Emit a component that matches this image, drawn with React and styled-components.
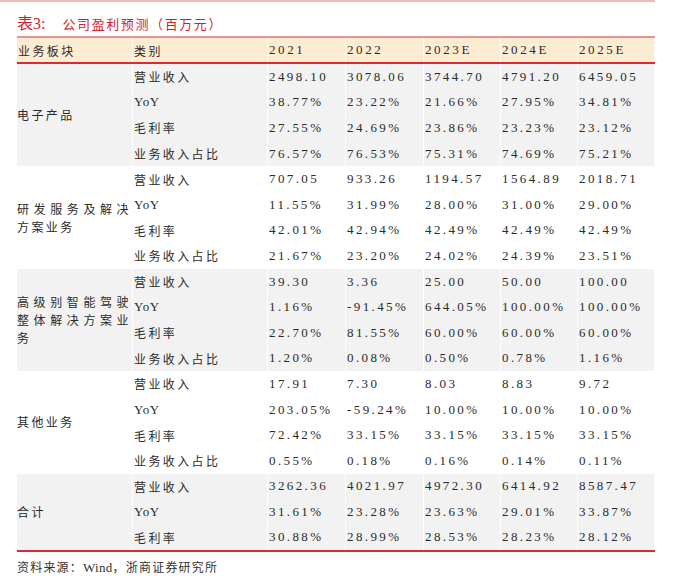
import React from "react";
import styled, { createGlobalStyle } from "styled-components";

const GlobalStyle = createGlobalStyle`
  body {
    margin: 0;
    background: #fff;
    color: #2b2b2b;
    font-family: "Liberation Serif", "Noto Sans CJK SC", serif;
  }
`;

const Page = styled.div`
  width: 655px;
  border-top: 2px solid #f2b9b9;
`;

const Inner = styled.div`
  padding-left: 17px;
`;

const Title = styled.div`
  margin-top: 10px;
  height: 24px;
  line-height: 24px;
  color: #cf1f2a;
  font-size: 13px;
  display: flex;
  gap: 17px;
`;

const TitleNo = styled.span`
  font-family: "Liberation Serif", "Noto Sans CJK SC", serif;
  font-size: 16px;
`;

const TitleText = styled.span`
  font-family: "Noto Sans CJK SC", sans-serif;
  letter-spacing: 1.6px;
`;

const Table = styled.table`
  width: 638px;
  border-collapse: collapse;
  table-layout: fixed;
`;

const Head = styled.th`
  height: 24px;
  padding: 0 1px;
  text-align: left;
  font-weight: normal;
  background: #feecd2;
  border-top: 2px solid #e49494;
  border-bottom: 2px solid #d92b33;
  box-shadow: inset -1px 0 0 rgba(255, 255, 255, 0.8);
  font-family: ${(p) =>
    p.$cjk ? `"Noto Sans CJK SC", sans-serif` : `"Liberation Serif", serif`};
  font-size: ${(p) => (p.$cjk ? "12px" : "13px")};
  letter-spacing: ${(p) => (p.$cjk ? "2.4px" : "2.6px")};
`;

const Row = styled.tr`
  background: ${(p) => (p.$shade ? "#f2f2f2" : "#fff")};
  border-bottom: ${(p) => (p.$last ? "2px solid #d92b33" : "none")};
`;

const spacing = { cjk: "2.4px", latin: "0.6px", num: "2.4px" };

const Cell = styled.td`
  height: 25.6px;
  padding: 0 1px;
  white-space: nowrap;
  box-shadow: inset -1px 0 0 rgba(255, 255, 255, 0.8);
  font-family: ${(p) =>
    p.$kind === "cjk"
      ? `"Noto Sans CJK SC", sans-serif`
      : `"Liberation Serif", serif`};
  font-size: ${(p) => (p.$kind === "cjk" ? "12px" : "13px")};
  letter-spacing: ${(p) => spacing[p.$kind]};
`;

const GroupCell = styled.td`
  padding: 0 2px 0 0;
  vertical-align: middle;
  font-family: "Noto Sans CJK SC", sans-serif;
  font-size: 12px;
  line-height: 18px;
  letter-spacing: 2.4px;
  text-align: justify;
  text-align-last: left;
  box-shadow: inset -1px 0 0 rgba(255, 255, 255, 0.8);
`;

const Source = styled.div`
  margin-top: 6px;
  line-height: 18px;
  font-size: 12px;
  letter-spacing: 1.2px;
  font-family: "Noto Sans CJK SC", sans-serif;
  color: #333;
`;

const Latin = styled.span`
  font-family: "Liberation Serif", serif;
  font-size: 13px;
  letter-spacing: 0.3px;
`;

const widths = [116, 135, 78, 78, 77, 77, 77];
const years = ["2021", "2022", "2023E", "2024E", "2025E"];

const groups = [
  {
    name: "电子产品",
    rows: [
      ["营业收入", "2498.10", "3078.06", "3744.70", "4791.20", "6459.05"],
      ["YoY", "38.77%", "23.22%", "21.66%", "27.95%", "34.81%"],
      ["毛利率", "27.55%", "24.69%", "23.86%", "23.23%", "23.12%"],
      ["业务收入占比", "76.57%", "76.53%", "75.31%", "74.69%", "75.21%"],
    ],
  },
  {
    name: "研发服务及解决方案业务",
    rows: [
      ["营业收入", "707.05", "933.26", "1194.57", "1564.89", "2018.71"],
      ["YoY", "11.55%", "31.99%", "28.00%", "31.00%", "29.00%"],
      ["毛利率", "42.01%", "42.94%", "42.49%", "42.49%", "42.49%"],
      ["业务收入占比", "21.67%", "23.20%", "24.02%", "24.39%", "23.51%"],
    ],
  },
  {
    name: "高级别智能驾驶整体解决方案业务",
    rows: [
      ["营业收入", "39.30", "3.36", "25.00", "50.00", "100.00"],
      ["YoY", "1.16%", "-91.45%", "644.05%", "100.00%", "100.00%"],
      ["毛利率", "22.70%", "81.55%", "60.00%", "60.00%", "60.00%"],
      ["业务收入占比", "1.20%", "0.08%", "0.50%", "0.78%", "1.16%"],
    ],
  },
  {
    name: "其他业务",
    rows: [
      ["营业收入", "17.91", "7.30", "8.03", "8.83", "9.72"],
      ["YoY", "203.05%", "-59.24%", "10.00%", "10.00%", "10.00%"],
      ["毛利率", "72.42%", "33.15%", "33.15%", "33.15%", "33.15%"],
      ["业务收入占比", "0.55%", "0.18%", "0.16%", "0.14%", "0.11%"],
    ],
  },
  {
    name: "合计",
    rows: [
      ["营业收入", "3262.36", "4021.97", "4972.30", "6414.92", "8587.47"],
      ["YoY", "31.61%", "23.28%", "23.63%", "29.01%", "33.87%"],
      ["毛利率", "30.88%", "28.99%", "28.53%", "28.23%", "28.12%"],
    ],
  },
];

export default function App() {
  return (
    <>
      <GlobalStyle />
      <Page>
        <Inner>
          <Title>
            <TitleNo>表3:</TitleNo>
            <TitleText>公司盈利预测（百万元）</TitleText>
          </Title>
          <Table>
            <colgroup>
              {widths.map((w, i) => (
                <col key={i} style={{ width: w }} />
              ))}
            </colgroup>
            <thead>
              <tr>
                <Head $cjk>业务板块</Head>
                <Head $cjk>类别</Head>
                {years.map((y) => (
                  <Head key={y}>{y}</Head>
                ))}
              </tr>
            </thead>
            <tbody>
              {groups.map((g, gi) =>
                g.rows.map((r, ri) => (
                  <Row
                    key={`${gi}-${ri}`}
                    $shade={gi % 2 === 0}
                    $last={gi === groups.length - 1 && ri === g.rows.length - 1}
                  >
                    {ri === 0 && (
                      <GroupCell rowSpan={g.rows.length}>{g.name}</GroupCell>
                    )}
                    <Cell $kind={r[0] === "YoY" ? "latin" : "cjk"}>{r[0]}</Cell>
                    {r.slice(1).map((v, vi) => (
                      <Cell key={vi} $kind="num">
                        {v}
                      </Cell>
                    ))}
                  </Row>
                ))
              )}
            </tbody>
          </Table>
          <Source>
            资料来源：<Latin>Wind</Latin>，浙商证券研究所
          </Source>
        </Inner>
      </Page>
    </>
  );
}
